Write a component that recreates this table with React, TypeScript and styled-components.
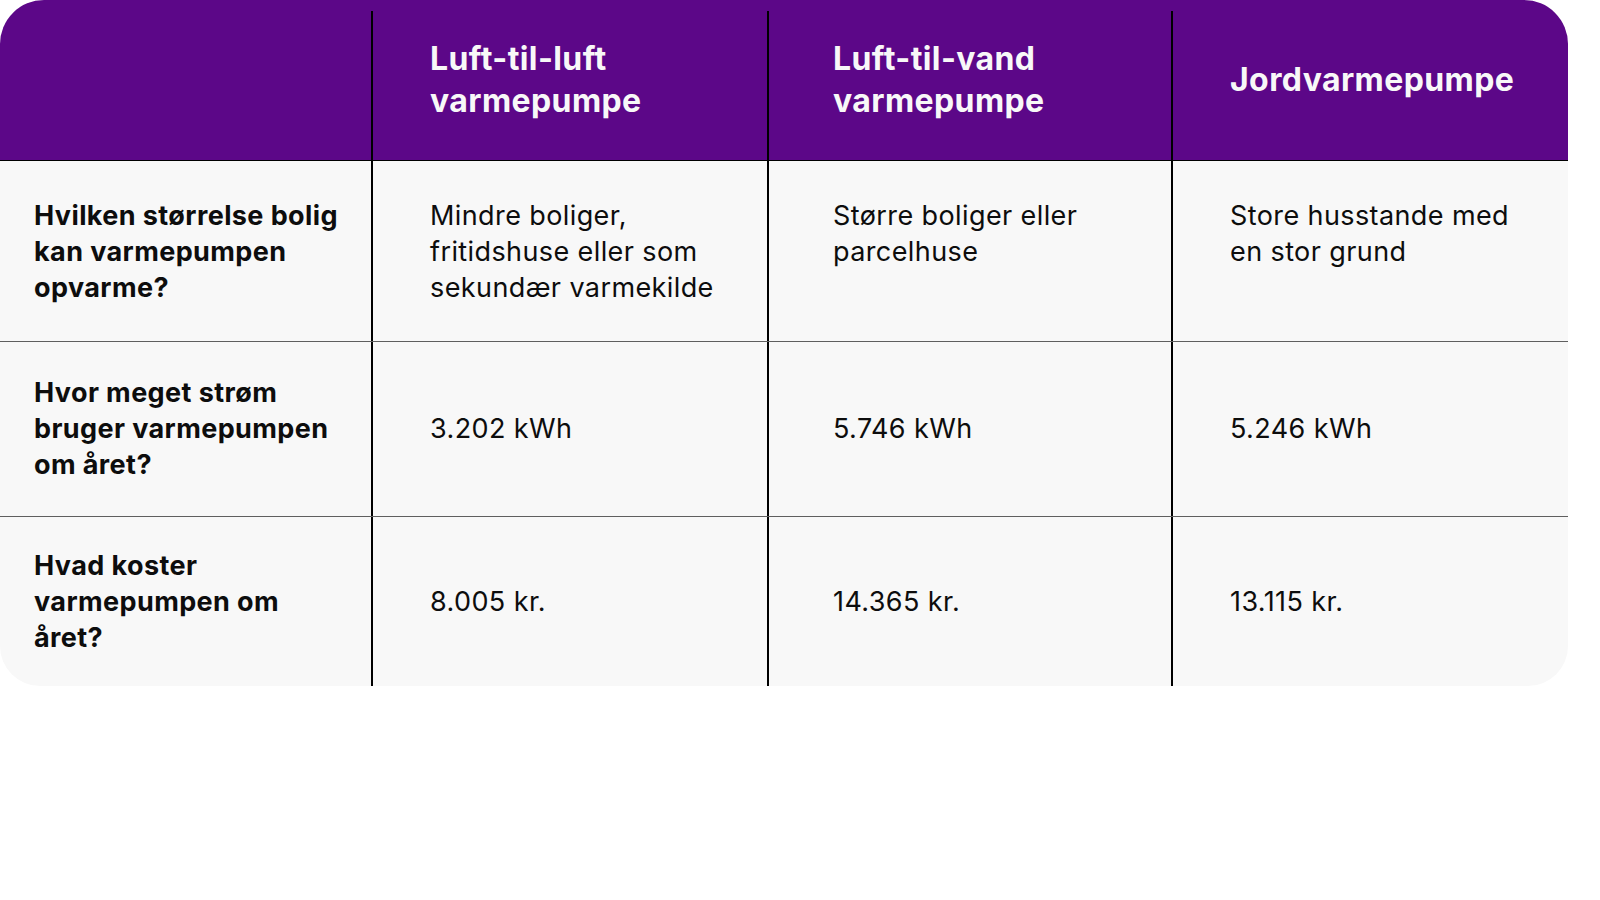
import React from 'react';
import styled, { createGlobalStyle } from 'styled-components';

const GlobalStyle = createGlobalStyle`
  body {
    margin: 0;
    background: #ffffff;
    font-family: Inter, "Noto Sans", sans-serif;
  }
`;

const COLUMNS = '371px 396px 404px 397px';
const PADDINGS = [34, 57, 64, 57];

const Table = styled.div`
  width: 1568px;
  display: flex;
  flex-direction: column;
  background: #f8f8f8;
  border-radius: 44px 44px 40px 40px;
  overflow: hidden;
`;

const HeaderRow = styled.div`
  display: grid;
  grid-template-columns: ${COLUMNS};
  height: 161px;
  box-sizing: border-box;
  background: #5c0788;
  border-bottom: 1px solid #000;
`;

const HeadCell = styled.div<{ $pad: number; $divider: boolean }>`
  margin-top: 11px;
  padding: 0 16px 12px ${(p) => p.$pad}px;
  display: flex;
  align-items: center;
  border-left: ${(p) => (p.$divider ? '2px solid #000' : 'none')};
  color: #f8f8f8;
  font-size: 32px;
  font-weight: 700;
  line-height: 42px;
  letter-spacing: 0.4px;
`;

const BodyRow = styled.div<{ $height: number; $last: boolean }>`
  display: grid;
  grid-template-columns: ${COLUMNS};
  height: ${(p) => p.$height}px;
  box-sizing: border-box;
  border-bottom: ${(p) => (p.$last ? 'none' : '1.5px solid #5f5f5f')};
`;

const Cell = styled.div<{ $pad: number; $divider: boolean; $top: boolean; $bold: boolean }>`
  display: flex;
  align-items: ${(p) => (p.$top ? 'flex-start' : 'center')};
  padding: ${(p) => (p.$top ? '37px' : '0')} 16px 0 ${(p) => p.$pad}px;
  border-left: ${(p) => (p.$divider ? '2px solid #000' : 'none')};
  color: #0d0d0d;
  font-size: 27px;
  font-weight: ${(p) => (p.$bold ? 700 : 400)};
  line-height: 36px;
  letter-spacing: 0.4px;
  white-space: nowrap;
`;

const heads = ['', 'Luft-til-luft\nvarmepumpe', 'Luft-til-vand\nvarmepumpe', 'Jordvarmepumpe'];

const rows = [
  {
    height: 181,
    top: true,
    cells: [
      'Hvilken størrelse bolig\nkan varmepumpen\nopvarme?',
      'Mindre boliger,\nfritidshuse eller som\nsekundær varmekilde',
      'Større boliger eller\nparcelhuse',
      'Store husstande med\nen stor grund',
    ],
  },
  {
    height: 175,
    top: false,
    cells: ['Hvor meget strøm\nbruger varmepumpen\nom året?', '3.202 kWh', '5.746 kWh', '5.246 kWh'],
  },
  {
    height: 169,
    top: false,
    cells: ['Hvad koster\nvarmepumpen om\nåret?', '8.005 kr.', '14.365 kr.', '13.115 kr.'],
  },
];

const Lines: React.FC<{ text: string }> = ({ text }) => (
  <span>
    {text.split('\n').map((line, i) => (
      <React.Fragment key={i}>
        {i > 0 && <br />}
        {line}
      </React.Fragment>
    ))}
  </span>
);

const App: React.FC = () => {
  return (
    <>
      <GlobalStyle />
      <Table>
        <HeaderRow>
          {heads.map((h, i) => (
            <HeadCell key={i} $pad={PADDINGS[i]} $divider={i > 0}>
              <Lines text={h} />
            </HeadCell>
          ))}
        </HeaderRow>
        {rows.map((row, r) => (
          <BodyRow key={r} $height={row.height} $last={r === rows.length - 1}>
            {row.cells.map((c, i) => (
              <Cell key={i} $pad={PADDINGS[i]} $divider={i > 0} $top={row.top} $bold={i === 0}>
                <Lines text={c} />
              </Cell>
            ))}
          </BodyRow>
        ))}
      </Table>
    </>
  );
};

export default App;
